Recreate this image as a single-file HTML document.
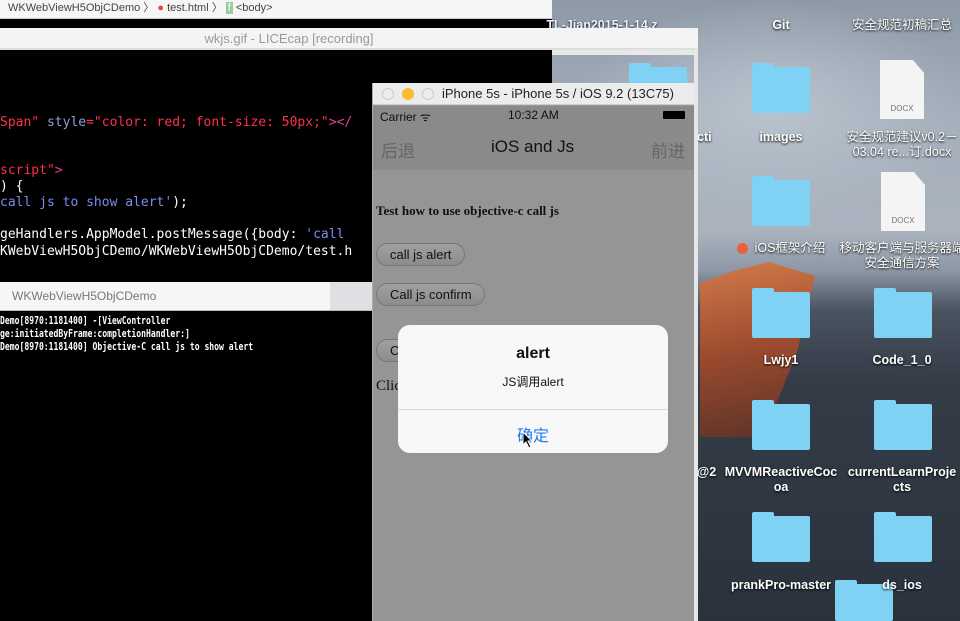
<!DOCTYPE html>
<html><head><meta charset="utf-8"><style>
*{margin:0;padding:0;box-sizing:border-box}
html,body{width:960px;height:621px;overflow:hidden}
body{position:relative;font-family:"Liberation Sans","Noto Sans CJK SC",sans-serif;background:#000}
.a{position:absolute}
.desk{left:552px;top:0;width:408px;height:621px;background:
radial-gradient(ellipse 200px 110px at 220px 110px,#b9c3ce 0%,rgba(170,180,192,0) 100%),
linear-gradient(180deg,#8e99a7 0px,#a4aeba 120px,#aab3be 230px,#8e98a6 270px,#4a5360 310px,#343c48 380px,#2a323e 621px);}
.mtn{left:700px;top:262px;width:115px;height:175px;background:linear-gradient(170deg,#d27a4a,#9a4a2e 50%,#5a3228);clip-path:polygon(0 12%,30% 5%,60% 0,100% 8%,85% 50%,55% 100%,0 100%)}
.fold{width:58px;height:46px;background:#7fd2f4;border-radius:2px}
.fold:before{content:"";position:absolute;left:0;top:-4px;width:22px;height:6px;background:#7fd2f4;border-radius:2px 2px 0 0}
.lbl{color:#fff;font-size:12.5px;font-weight:bold;text-align:center;width:124px;line-height:15px;text-shadow:0 1px 2px #000}
.doc{width:44px;height:59px;background:#f4f4f4;clip-path:polygon(0 0,75% 0,100% 22%,100% 100%,0 100%);font-size:8px;color:#777;text-align:center;padding-top:44px}
.code{font-family:"DejaVu Sans Mono","Liberation Mono",monospace;font-size:13px;white-space:pre;color:#fff}
.con{font-family:"DejaVu Sans Mono",monospace;font-size:10.5px;font-weight:bold;white-space:pre;color:#fff;line-height:13px;transform:scaleX(0.77);transform-origin:0 0}
.btn{border:1px solid #777;border-radius:12px;background:linear-gradient(#a0a0a0,#8c8c8c);font-size:13px;color:#111;height:23px;line-height:21px;padding-left:13px}
</style></head><body>
<div class="a desk"></div>
<div class="a mtn"></div>
<!-- desktop icons -->
<div class="a lbl" style="left:540px;top:18px;color:#eef">TL-Jian2015-1-14.z</div>
<div class="a lbl" style="left:719px;top:18px">Git</div>
<div class="a lbl" style="left:840px;top:18px;font-weight:normal">安全规范初稿汇总</div>
<div class="a fold" style="left:629px;top:67px"></div>
<div class="a fold" style="left:752px;top:67px"></div>
<div class="a lbl" style="left:719px;top:130px">images</div>
<div class="a lbl" style="left:697px;top:130px;width:30px;text-align:left">cti</div>
<div class="a doc" style="left:880px;top:60px">DOCX</div>
<div class="a lbl" style="left:836px;top:130px;width:132px;font-weight:normal">安全规范建议v0.2－03.04 re...订.docx</div>
<div class="a fold" style="left:752px;top:180px"></div>
<div class="a doc" style="left:881px;top:172px">DOCX</div>
<div class="a" style="left:737px;top:243px;width:11px;height:11px;border-radius:50%;background:#e8623a"></div>
<div class="a lbl" style="left:740px;top:241px;width:100px;font-weight:normal">iOS框架介绍</div>
<div class="a lbl" style="left:836px;top:241px;width:132px;font-weight:normal">移动客户端与服务器端安全通信方案</div>
<div class="a fold" style="left:752px;top:292px"></div>
<div class="a fold" style="left:874px;top:292px"></div>
<div class="a lbl" style="left:719px;top:353px">Lwjy1</div>
<div class="a lbl" style="left:840px;top:353px">Code_1_0</div>
<div class="a fold" style="left:752px;top:404px"></div>
<div class="a fold" style="left:874px;top:404px"></div>
<div class="a lbl" style="left:697px;top:465px;width:30px;text-align:left">@2</div>
<div class="a lbl" style="left:719px;top:465px;width:124px">MVVMReactiveCoc oa</div>
<div class="a lbl" style="left:840px;top:465px;width:124px">currentLearnProje cts</div>
<div class="a fold" style="left:752px;top:516px"></div>
<div class="a fold" style="left:874px;top:516px"></div>
<div class="a lbl" style="left:719px;top:578px">prankPro-master</div>
<div class="a fold" style="left:835px;top:584px;height:37px"></div>
<div class="a lbl" style="left:840px;top:578px">ds_ios</div>

<!-- xcode top bar -->
<div class="a" style="left:0;top:0;width:552px;height:19px;background:#f6f6f6;border-bottom:1px solid #ccc;font-size:11px;color:#444;line-height:16px;padding-left:8px">WKWebViewH5ObjCDemo 〉 <span style="color:#e44">●</span> test.html 〉 <span style="background:#9c9;color:#fff;padding:0 2px">f</span> &lt;body&gt;</div>
<!-- LICEcap frame -->
<div class="a" style="left:0;top:28px;width:698px;height:22px;background:#f4f4f4;border-bottom:2px solid #ddd;font-size:13px;color:#999;text-align:center;line-height:22px;padding-right:120px">wkjs.gif - LICEcap [recording]</div>
<div class="a" style="left:694px;top:48px;width:4px;height:573px;background:#e6e6e6"></div>
<div class="a" style="left:552px;top:50px;width:146px;height:5px;background:#e8e8e8"></div>
<div class="a" style="left:0;top:50px;width:552px;height:6px;background:#000"></div>
<!-- code -->
<div class="a code" style="left:0;top:115px"><span style="color:#ff2f4f">Span"</span> <span style="color:#8aa0d8">style</span><span style="color:#ff2f4f">="color: red; font-size: 50px;"</span><span style="color:#e5409f">&gt;&lt;/</span></div>
<div class="a code" style="left:0;top:163px"><span style="color:#ff2f4f">script"</span><span style="color:#e5409f">&gt;</span></div>
<div class="a code" style="left:0;top:179px">) {</div>
<div class="a code" style="left:0;top:195px"><span style="color:#7a8cf0">call js to show alert'</span>);</div>
<div class="a code" style="left:0;top:227px">geHandlers.AppModel.postMessage({body: <span style="color:#7a8cf0">'call</span></div>
<div class="a code" style="left:0;top:244px">KWebViewH5ObjCDemo/WKWebViewH5ObjCDemo/test.h</div>
<!-- console -->
<div class="a" style="left:0;top:282px;width:372px;height:29px;background:#f6f6f6;border-bottom:1px solid #bbb;font-size:12px;color:#777;line-height:29px;padding-left:12px">WKWebViewH5ObjCDemo</div>
<div class="a" style="left:330px;top:282px;width:42px;height:28px;background:#e0e0e4"></div>
<div class="a con" style="left:0;top:315px">Demo[8970:1181400] -[ViewController
ge:initiatedByFrame:completionHandler:]
Demo[8970:1181400] Objective-C call js to show alert</div>

<!-- simulator -->
<div class="a" style="left:372px;top:83px;width:322px;height:538px;background:#959595;border-left:1px solid #aaa"></div>
<div class="a" style="left:373px;top:83px;width:321px;height:22px;background:#ececec;border-bottom:1px solid #ccc;font-size:13px;color:#222;line-height:22px;padding-left:69px">iPhone 5s - iPhone 5s / iOS 9.2 (13C75)</div>
<div class="a" style="left:382px;top:88px;width:12px;height:12px;border-radius:50%;border:1px solid #ccc"></div>
<div class="a" style="left:402px;top:88px;width:12px;height:12px;border-radius:50%;background:#fdbd2e"></div>
<div class="a" style="left:422px;top:88px;width:12px;height:12px;border-radius:50%;border:1px solid #ccc"></div>
<div class="a" style="left:373px;top:106px;width:321px;height:64px;background:#8a8a8a"></div>
<div class="a" style="left:380px;top:108px;font-size:12px;color:#111">Carrier ᯤ</div>
<div class="a" style="left:508px;top:108px;font-size:12px;color:#111">10:32 AM</div>
<div class="a" style="left:663px;top:111px;width:22px;height:8px;background:#000;border-radius:1px"></div>
<div class="a" style="left:381px;top:137px;font-size:17px;color:#666">后退</div>
<div class="a" style="left:491px;top:137px;font-size:17px;color:#111">iOS and Js</div>
<div class="a" style="left:651px;top:137px;font-size:17px;color:#666">前进</div>
<div class="a" style="left:376px;top:203px;font-family:'Liberation Serif',serif;font-weight:bold;font-size:13px;color:#111">Test how to use objective-c call js</div>
<div class="a btn" style="left:376px;top:243px;width:89px">call js alert</div>
<div class="a btn" style="left:376px;top:283px;width:109px">Call js confirm</div>
<div class="a btn" style="left:376px;top:339px;width:40px">C</div>
<div class="a" style="left:376px;top:378px;font-family:'Liberation Serif',serif;font-size:15px;color:#111">Clic</div>
<!-- alert -->
<div class="a" style="left:398px;top:325px;width:270px;height:128px;background:#f8f8f8;border-radius:12px"></div>
<div class="a" style="left:398px;top:345px;width:270px;text-align:center;font-size:16px;font-weight:bold;color:#111">alert</div>
<div class="a" style="left:398px;top:373px;width:270px;text-align:center;font-size:12px;color:#111">JS调用alert</div>
<div class="a" style="left:398px;top:409px;width:270px;height:1px;background:#ddd"></div>
<div class="a" style="left:398px;top:422px;width:270px;text-align:center;font-size:16px;color:#1a7df5">确定</div>
<svg class="a" style="left:522px;top:431px" width="12" height="18" viewBox="0 0 12 18"><path d="M1 1 L1 14 L4 11 L7 17 L9 16 L6 10 L10 10 Z" fill="#000" stroke="#fff" stroke-width="1"/></svg>
</body></html>
